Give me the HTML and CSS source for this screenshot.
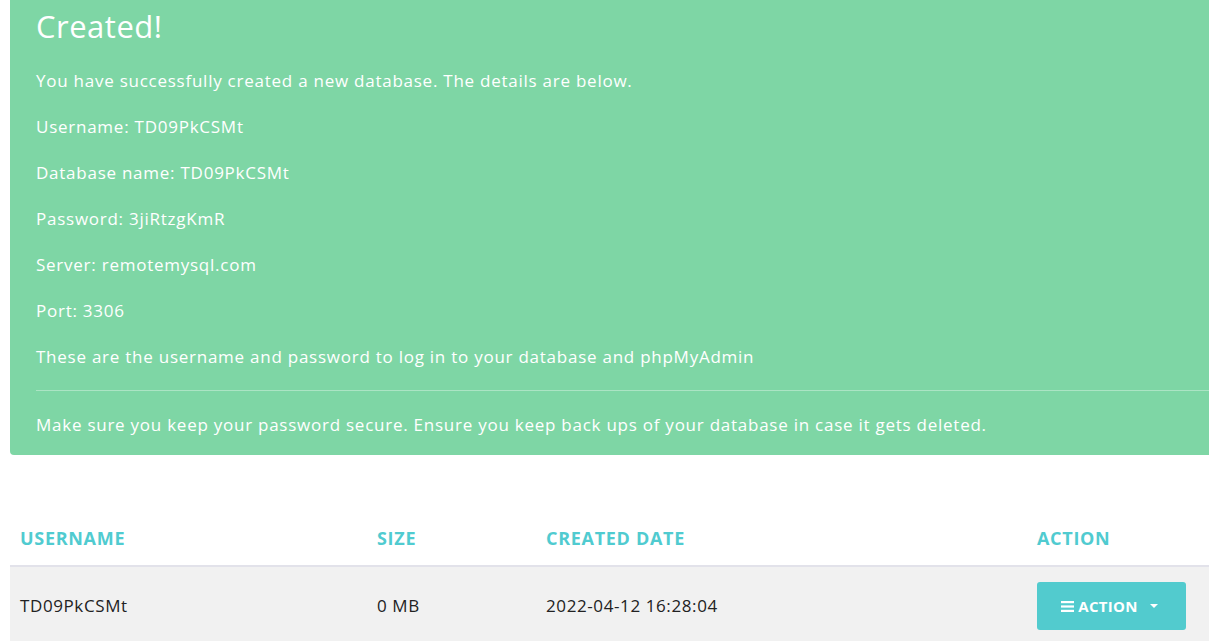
FILE: index.html
```html
<!DOCTYPE html>
<html>
<head>
<meta charset="utf-8">
<link rel="stylesheet" href="styles.css">
</head>
<body>
<div class="page">
  <div class="alert">
    <h2 class="alert-title">Created!</h2>
    <p>You have successfully created a new database. The details are below.</p>
    <p>Username: TD09PkCSMt</p>
    <p>Database name: TD09PkCSMt</p>
    <p>Password: 3jiRtzgKmR</p>
    <p>Server: remotemysql.com</p>
    <p>Port: 3306</p>
    <p>These are the username and password to log in to your database and phpMyAdmin</p>
    <hr class="alert-rule">
    <p class="last">Make sure you keep your password secure. Ensure you keep back ups of your database in case it gets deleted.</p>
  </div>

  <table class="db-table">
    <colgroup>
      <col class="c1"><col class="c2"><col class="c3"><col class="c4">
    </colgroup>
    <thead>
      <tr><th>USERNAME</th><th>SIZE</th><th>CREATED DATE</th><th>ACTION</th></tr>
    </thead>
    <tbody>
      <tr>
        <td>TD09PkCSMt</td>
        <td>0 MB</td>
        <td>2022-04-12 16:28:04</td>
        <td>
          <button class="btn-action">
            <svg class="bars" width="13" height="11" viewBox="0 0 13 11"><rect x="0" y="0" width="13" height="2.2" fill="#fff"/><rect x="0" y="4.4" width="13" height="2.2" fill="#fff"/><rect x="0" y="8.8" width="13" height="2.2" fill="#fff"/></svg>
            <span>ACTION</span>
            <span class="caret"></span>
          </button>
        </td>
      </tr>
    </tbody>
  </table>
</div>
</body>
</html>
```
FILE: styles.css
```css
html, body {
  margin: 0;
  padding: 0;
  background: #fff;
  overflow: hidden;
}
body {
  font-family: "Open Sans", "DejaVu Sans", sans-serif;
  color: #222;
}
.page {
  width: 1240px;
  padding-left: 10px;
}
.alert {
  margin-top: -24px;
  background: #7ed6a5;
  color: #fff;
  border-radius: 4px;
  padding: 30px 26px 18px 26px;
  font-size: 17px;
  letter-spacing: 0.75px;
}
.alert-title {
  margin: 0 0 22px 0;
  font-weight: 400;
  font-size: 31px;
  line-height: 40px;
  letter-spacing: 0.5px;
}
.alert p {
  margin: 0 0 21px 0;
  line-height: 25px;
}
.alert p.last {
  margin-bottom: 0;
}
.alert-rule {
  border: 0;
  border-top: 1px solid rgba(255,255,255,0.35);
  margin: 2px 0 21px 0;
}
.db-table {
  margin-top: 59px;
  border-collapse: collapse;
  width: 1230px;
  font-size: 17px;
}
.c1 { width: 357px; }
.c2 { width: 169px; }
.c3 { width: 491px; }
.db-table th {
  text-align: left;
  color: #50cbd0;
  font-weight: 700;
  font-size: 18px;
  letter-spacing: 0.7px;
  padding: 14px 10px 17px 10px;
  line-height: 20px;
  border-bottom: 2px solid #e2e2ea;
}
.db-table td {
  background: #f1f1f1;
  padding: 15px 10px 16px 10px;
  line-height: 20px;
  letter-spacing: 0.6px;
}
.btn-action {
  display: inline-flex;
  align-items: center;
  gap: 4px;
  width: 149px;
  height: 48px;
  justify-content: center;
  background: #52cbce;
  border: 0;
  border-radius: 3px;
  color: #fff;
  font-family: inherit;
  font-weight: 700;
  font-size: 15px;
  letter-spacing: 0.3px;
  padding: 0 4px 0 0;
}
.caret {
  width: 0;
  height: 0;
  border-left: 4px solid transparent;
  border-right: 4px solid transparent;
  border-top: 4px solid #fff;
  margin-left: 8px;
}
```
